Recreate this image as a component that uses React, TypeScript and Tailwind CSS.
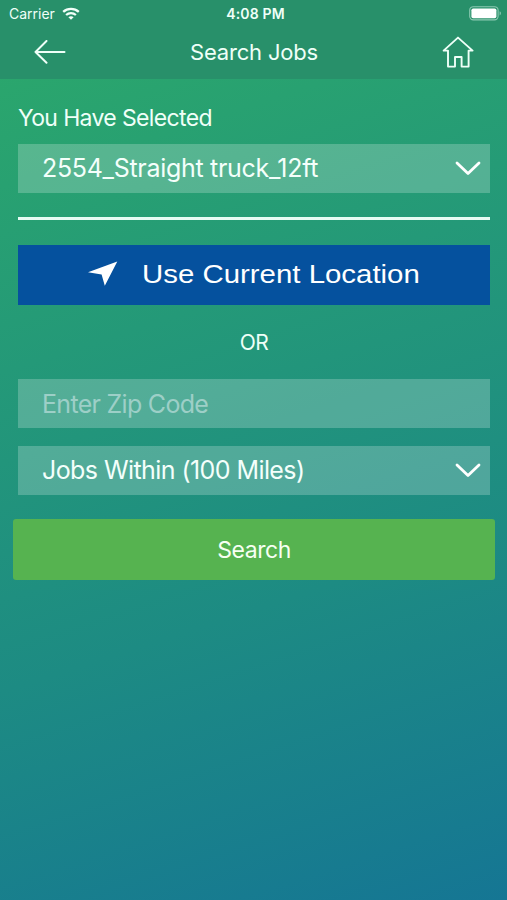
import React, { useState } from 'react';

const VEHICLE = '2554_Straight truck_12ft';
const RADIUS = 'Jobs Within (100 Miles)';

const WifiIcon: React.FC = () => (
  <svg className="w-[18px] h-[13px]" viewBox="0 0 18 13" fill="none" stroke="#f2fff9" strokeWidth="2.3">
    <path d="M1.2 4.9C5.6 .9 12.4 .9 16.8 4.9" />
    <path d="M4.1 8C6.9 5.5 11.1 5.5 13.9 8" />
    <path d="M6.4 10.2C7.9 8.9 10.1 8.9 11.6 10.2L9 12.8Z" fill="#f2fff9" stroke="none" />
  </svg>
);

const BatteryIcon: React.FC = () => (
  <svg className="w-[33px] h-[15px]" viewBox="0 0 33 15" fill="none">
    <rect x=".7" y=".7" width="28.4" height="13.2" rx="3.6" stroke="#8cc9b2" strokeWidth="1.1" />
    <rect x="2.4" y="2.4" width="25" height="9.8" rx="1.8" fill="#fff" />
    <path d="M30.6 5.2C32.4 5.8 32.4 8.8 30.6 9.4Z" fill="#8cc9b2" />
  </svg>
);

const BackIcon: React.FC = () => (
  <svg className="w-8 h-6" viewBox="0 0 32 24" fill="none" stroke="#effff8" strokeWidth="2" strokeLinecap="round" strokeLinejoin="round">
    <path d="M30.5 12H1.5M12.5 1L1.5 12L12.5 22.8" />
  </svg>
);

const HomeIcon: React.FC = () => (
  <svg className="w-8 h-8" viewBox="0 0 32 32" fill="none" stroke="#effff8" strokeWidth="1.9" strokeLinejoin="round">
    <path d="M16 1.6L1.6 14.6H6V30.6H13V21H19.6V30.6H26.6V14.6H30.6Z" />
  </svg>
);

const ChevronIcon: React.FC = () => (
  <svg className="w-[26px] h-4" viewBox="0 0 26 16" fill="none" stroke="#fff" strokeWidth="2.8" strokeLinecap="round" strokeLinejoin="round">
    <path d="M2 2L13 12.6L24 2" />
  </svg>
);

const SelectRow: React.FC<{ label: string; labelClass: string }> = ({ label, labelClass }) => (
  <button className="flex h-[49px] w-full items-center justify-between bg-white/22 pl-6 pr-[9px] text-left text-[25px] text-[#f4fffb]">
    <span className={`whitespace-nowrap ${labelClass}`}>{label}</span>
    <ChevronIcon />
  </button>
);

export default function App() {
  const [zip, setZip] = useState('');

  return (
    <div className="flex h-[900px] w-[507px] flex-col overflow-hidden bg-linear-[162deg,#2ca96a_0%,#249978_35%,#1d8b83_65%,#157694_100%] font-['Inter',sans-serif] text-[#effff8]">
      <header className="h-[79px] bg-[#28906a]">
        {/* Status bar */}
        <div className="grid h-[27px] grid-cols-3 items-center pl-[9px] pr-[5px]">
          <div className="flex items-center gap-[7px]">
            <span className="text-[14px] leading-none">Carrier</span>
            <WifiIcon />
          </div>
          <div className="text-center text-[14px] leading-none font-semibold tracking-[0.01em]">4:08 PM</div>
          <div className="flex justify-end">
            <BatteryIcon />
          </div>
        </div>

        {/* Title bar */}
        <div className="flex h-[50px] items-center justify-between pl-[34px] pr-[33px]">
          <BackIcon />
          <h1 className="text-[22px] tracking-[-0.008em]">Search Jobs</h1>
          <HomeIcon />
        </div>
      </header>

      <main className="flex flex-col pl-[18px] pr-[17px] pt-[22px]">
        <h2 className="h-[43px] text-[23px] leading-[34px] tracking-[-0.028em]">You Have Selected</h2>
        <SelectRow label={VEHICLE} labelClass="tracking-[-0.012em]" />
        <div className="mt-6 h-[3px] bg-[#e6fbf3]" />

        <button className="mt-[25px] flex h-[60px] items-center bg-[#05519e] pb-[3px] pl-[70px] text-white">
          <svg className="h-[25px] w-[30px]" viewBox="0 0 30 25" fill="#fff">
            <path d="M29.3 .5L0 11.3L13.6 13.6L16.8 24.8Z" />
          </svg>
          <span className="ml-6 origin-left scale-x-[1.176] pt-[2px] whitespace-nowrap font-['Liberation_Sans',sans-serif] text-[25px]">
            Use Current Location
          </span>
        </button>

        <div className="mt-[19px] h-[37px] text-center text-[21px] leading-[37px] tracking-[-0.02em]">OR</div>

        <input
          value={zip}
          onChange={(e) => setZip(e.target.value)}
          placeholder="Enter Zip Code"
          className="mt-[18px] h-[49px] bg-white/22 px-6 text-[25px] tracking-[-0.028em] outline-none placeholder:text-[#9dcfc7]"
        />
        <div className="mt-[18px]">
          <SelectRow label={RADIUS} labelClass="tracking-[-0.023em]" />
        </div>

        <button className="-mx-[5px] mt-6 h-[61px] rounded-[3px] bg-[#56b350] pt-[2px] text-[23px] tracking-[-0.02em] text-[#f6fff2]">
          Search
        </button>
      </main>
    </div>
  );
}
